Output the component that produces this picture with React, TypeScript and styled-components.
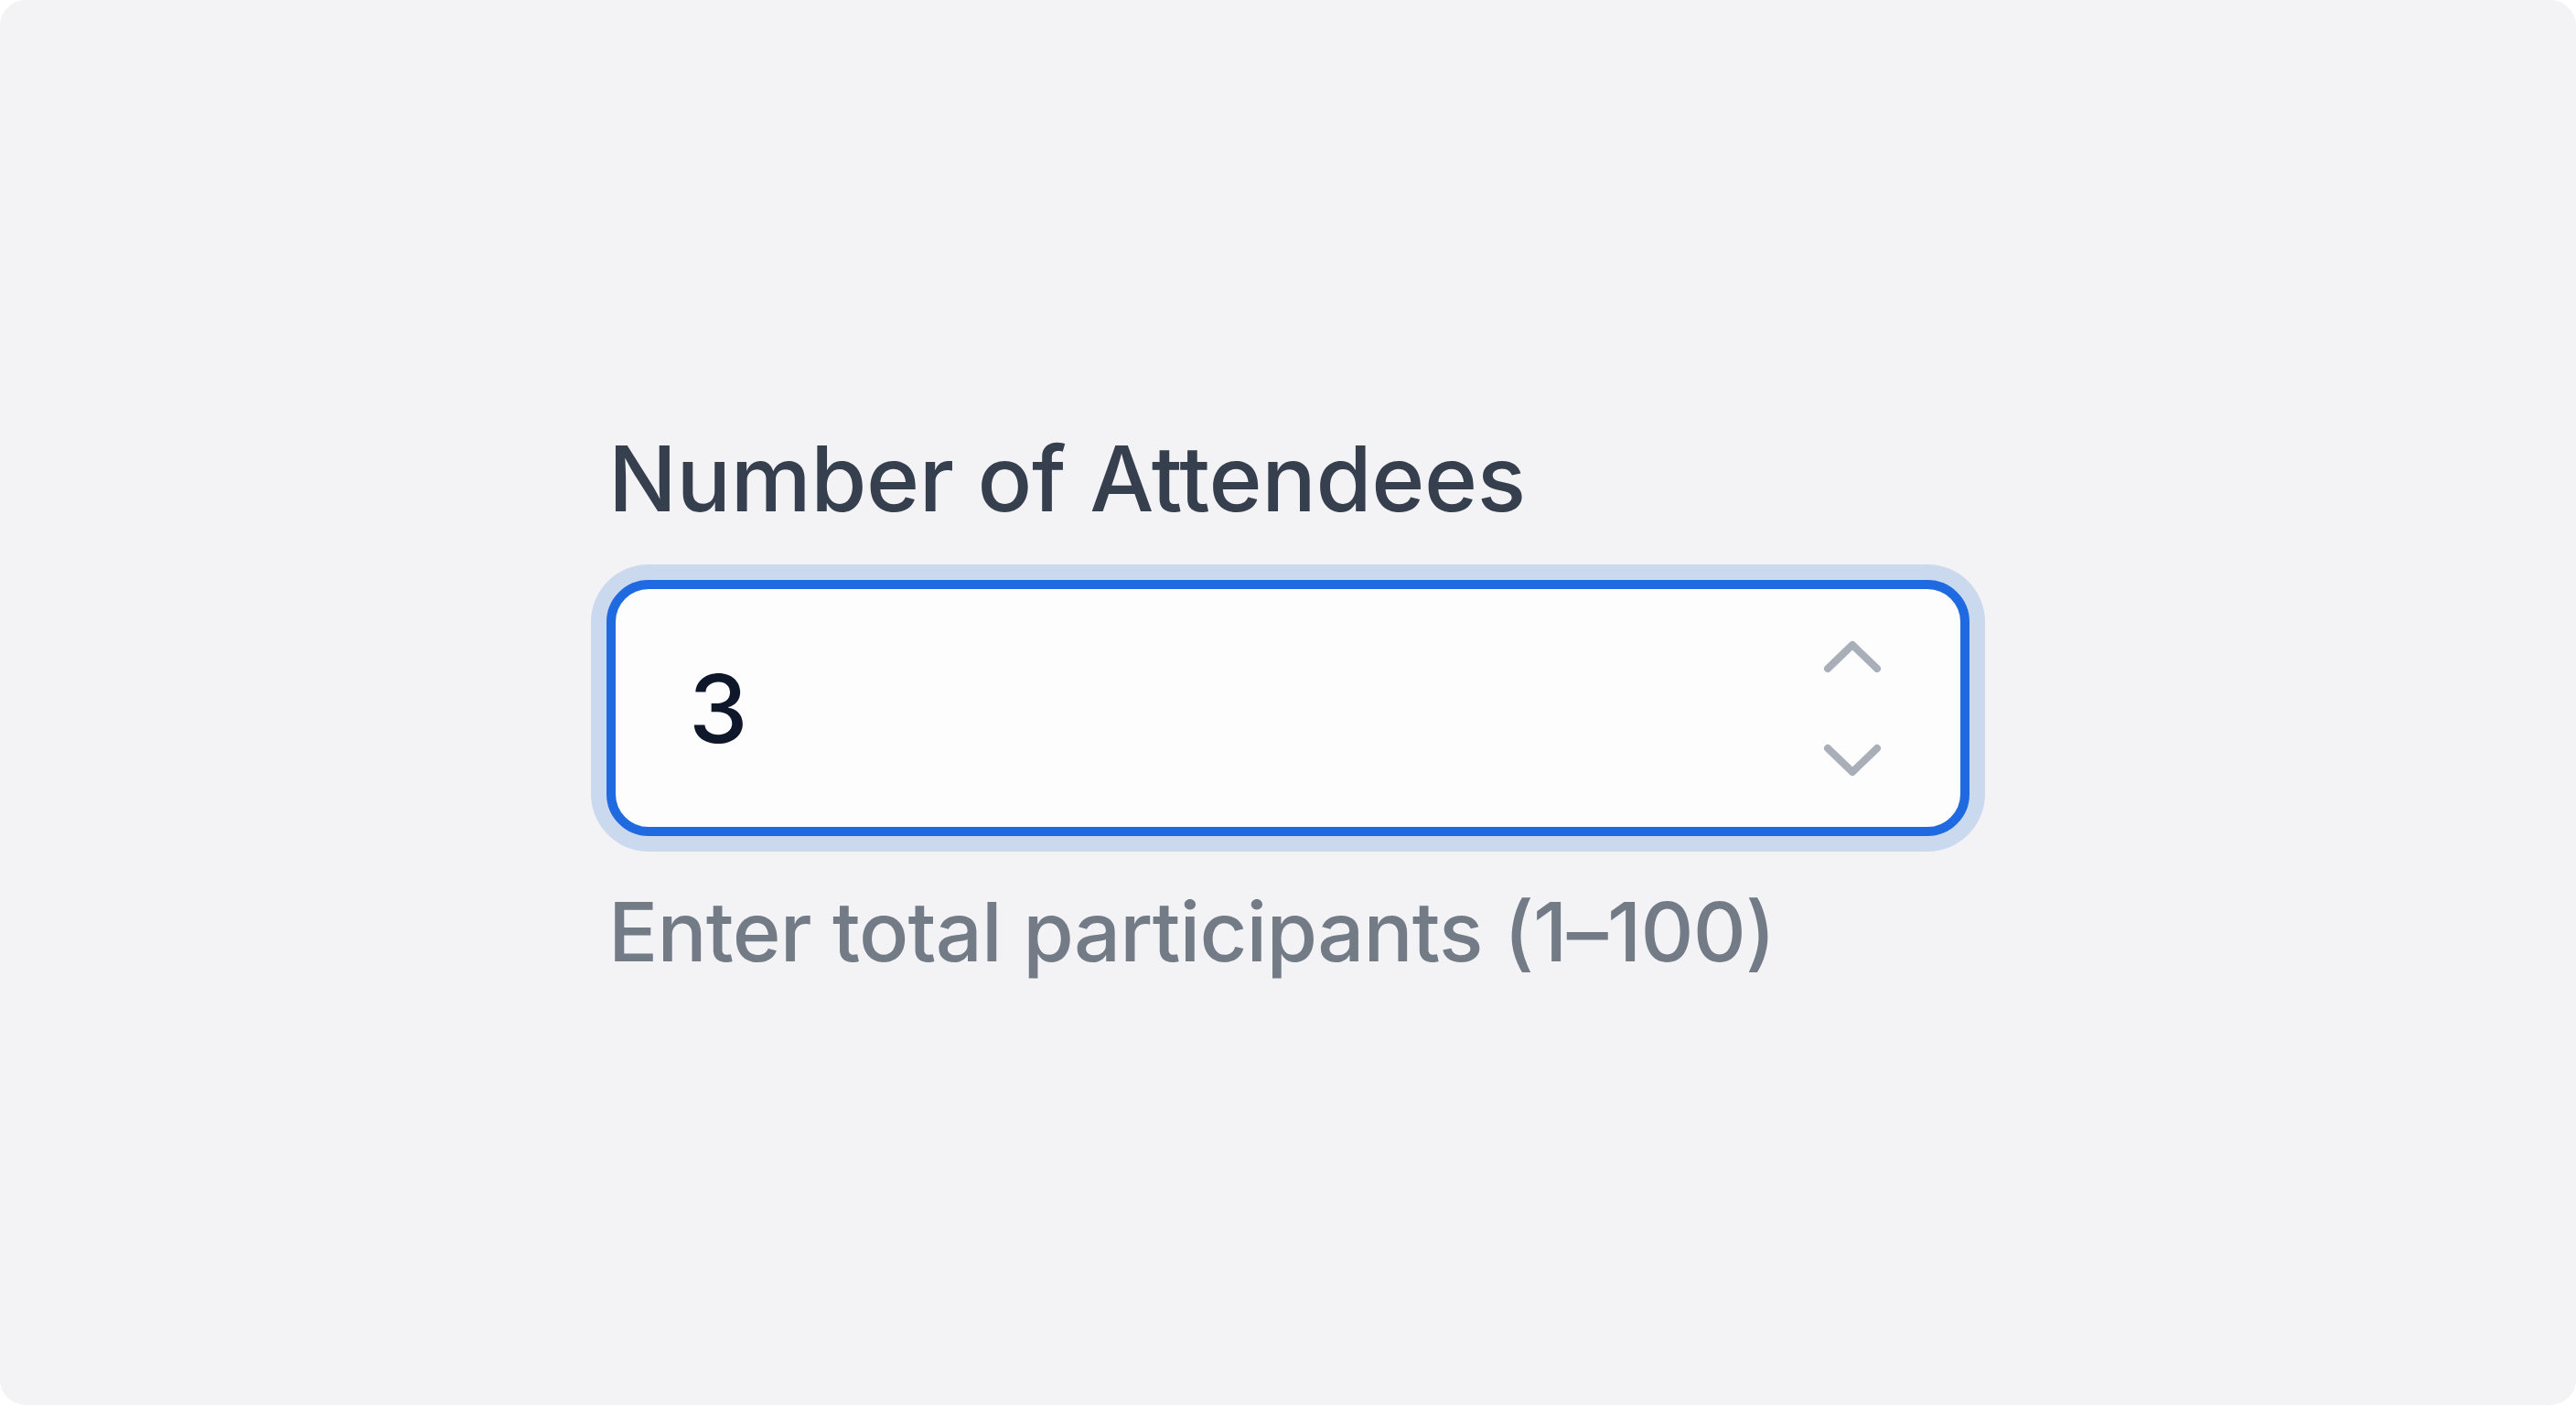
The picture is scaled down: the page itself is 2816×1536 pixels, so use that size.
import React from "react";
import styled, { createGlobalStyle } from "styled-components";

const GlobalStyle = createGlobalStyle`
  html, body {
    margin: 0;
    padding: 0;
    background: #ffffff;
  }
  * { box-sizing: border-box; }
`;

const Page = styled.main`
  width: 100vw;
  height: 100vh;
  background: #f3f3f6;
  border-radius: 28px;
  display: flex;
  align-items: center;
  justify-content: center;
  font-family: Inter, "Noto Sans", sans-serif;
`;

const Field = styled.div`
  width: 1490px;
  display: flex;
  flex-direction: column;
`;

const Label = styled.label`
  font-size: 99px;
  line-height: 120px;
  font-weight: 450;
  letter-spacing: -0.4px;
  color: #363f4d;
  margin-bottom: 51px;
  padding-left: 2px;
`;

const Shell = styled.div`
  height: 280px;
  border: 10px solid #1f6ae1;
  border-radius: 46px;
  background: #fdfdfd;
  box-shadow: 0 0 0 17px #cbd9ef;
  display: flex;
  align-items: center;
  padding: 0 86px 0 80px;
`;

const ValueInput = styled.input`
  flex: 1;
  min-width: 0;
  border: none;
  outline: none;
  background: transparent;
  font-family: Inter, "Noto Sans", sans-serif;
  font-size: 103px;
  font-weight: 450;
  color: #0f172a;
  padding: 0;
  margin: 0;
`;

const Stepper = styled.div`
  display: flex;
  flex-direction: column;
  align-items: center;
  gap: 77px;
`;

const StepButton = styled.button`
  border: none;
  background: transparent;
  padding: 0;
  margin: 0;
  display: flex;
  cursor: pointer;
`;

const Hint = styled.p`
  margin: 51px 0 0;
  font-size: 90px;
  line-height: 108px;
  font-weight: 450;
  letter-spacing: -0.8px;
  color: #737b86;
  padding-left: 2px;
`;

const Chevron: React.FC<{ dir: "up" | "down" }> = ({ dir }) => (
  <svg width="64" height="36" viewBox="0 0 64 36" fill="none">
    <polyline
      points={dir === "up" ? "5,31 32,5 59,31" : "5,5 32,31 59,5"}
      stroke="#a9afb9"
      strokeWidth="8"
      strokeLinecap="round"
      strokeLinejoin="round"
    />
  </svg>
);

export default function App() {
  return (
    <>
      <GlobalStyle />
      <Page>
        <Field>
          <Label htmlFor="attendees">Number of Attendees</Label>
          <Shell>
            <ValueInput id="attendees" type="text" value="3" readOnly />
            <Stepper>
              <StepButton aria-label="Increase">
                <Chevron dir="up" />
              </StepButton>
              <StepButton aria-label="Decrease">
                <Chevron dir="down" />
              </StepButton>
            </Stepper>
          </Shell>
          <Hint>Enter total participants (1–100)</Hint>
        </Field>
      </Page>
    </>
  );
}
